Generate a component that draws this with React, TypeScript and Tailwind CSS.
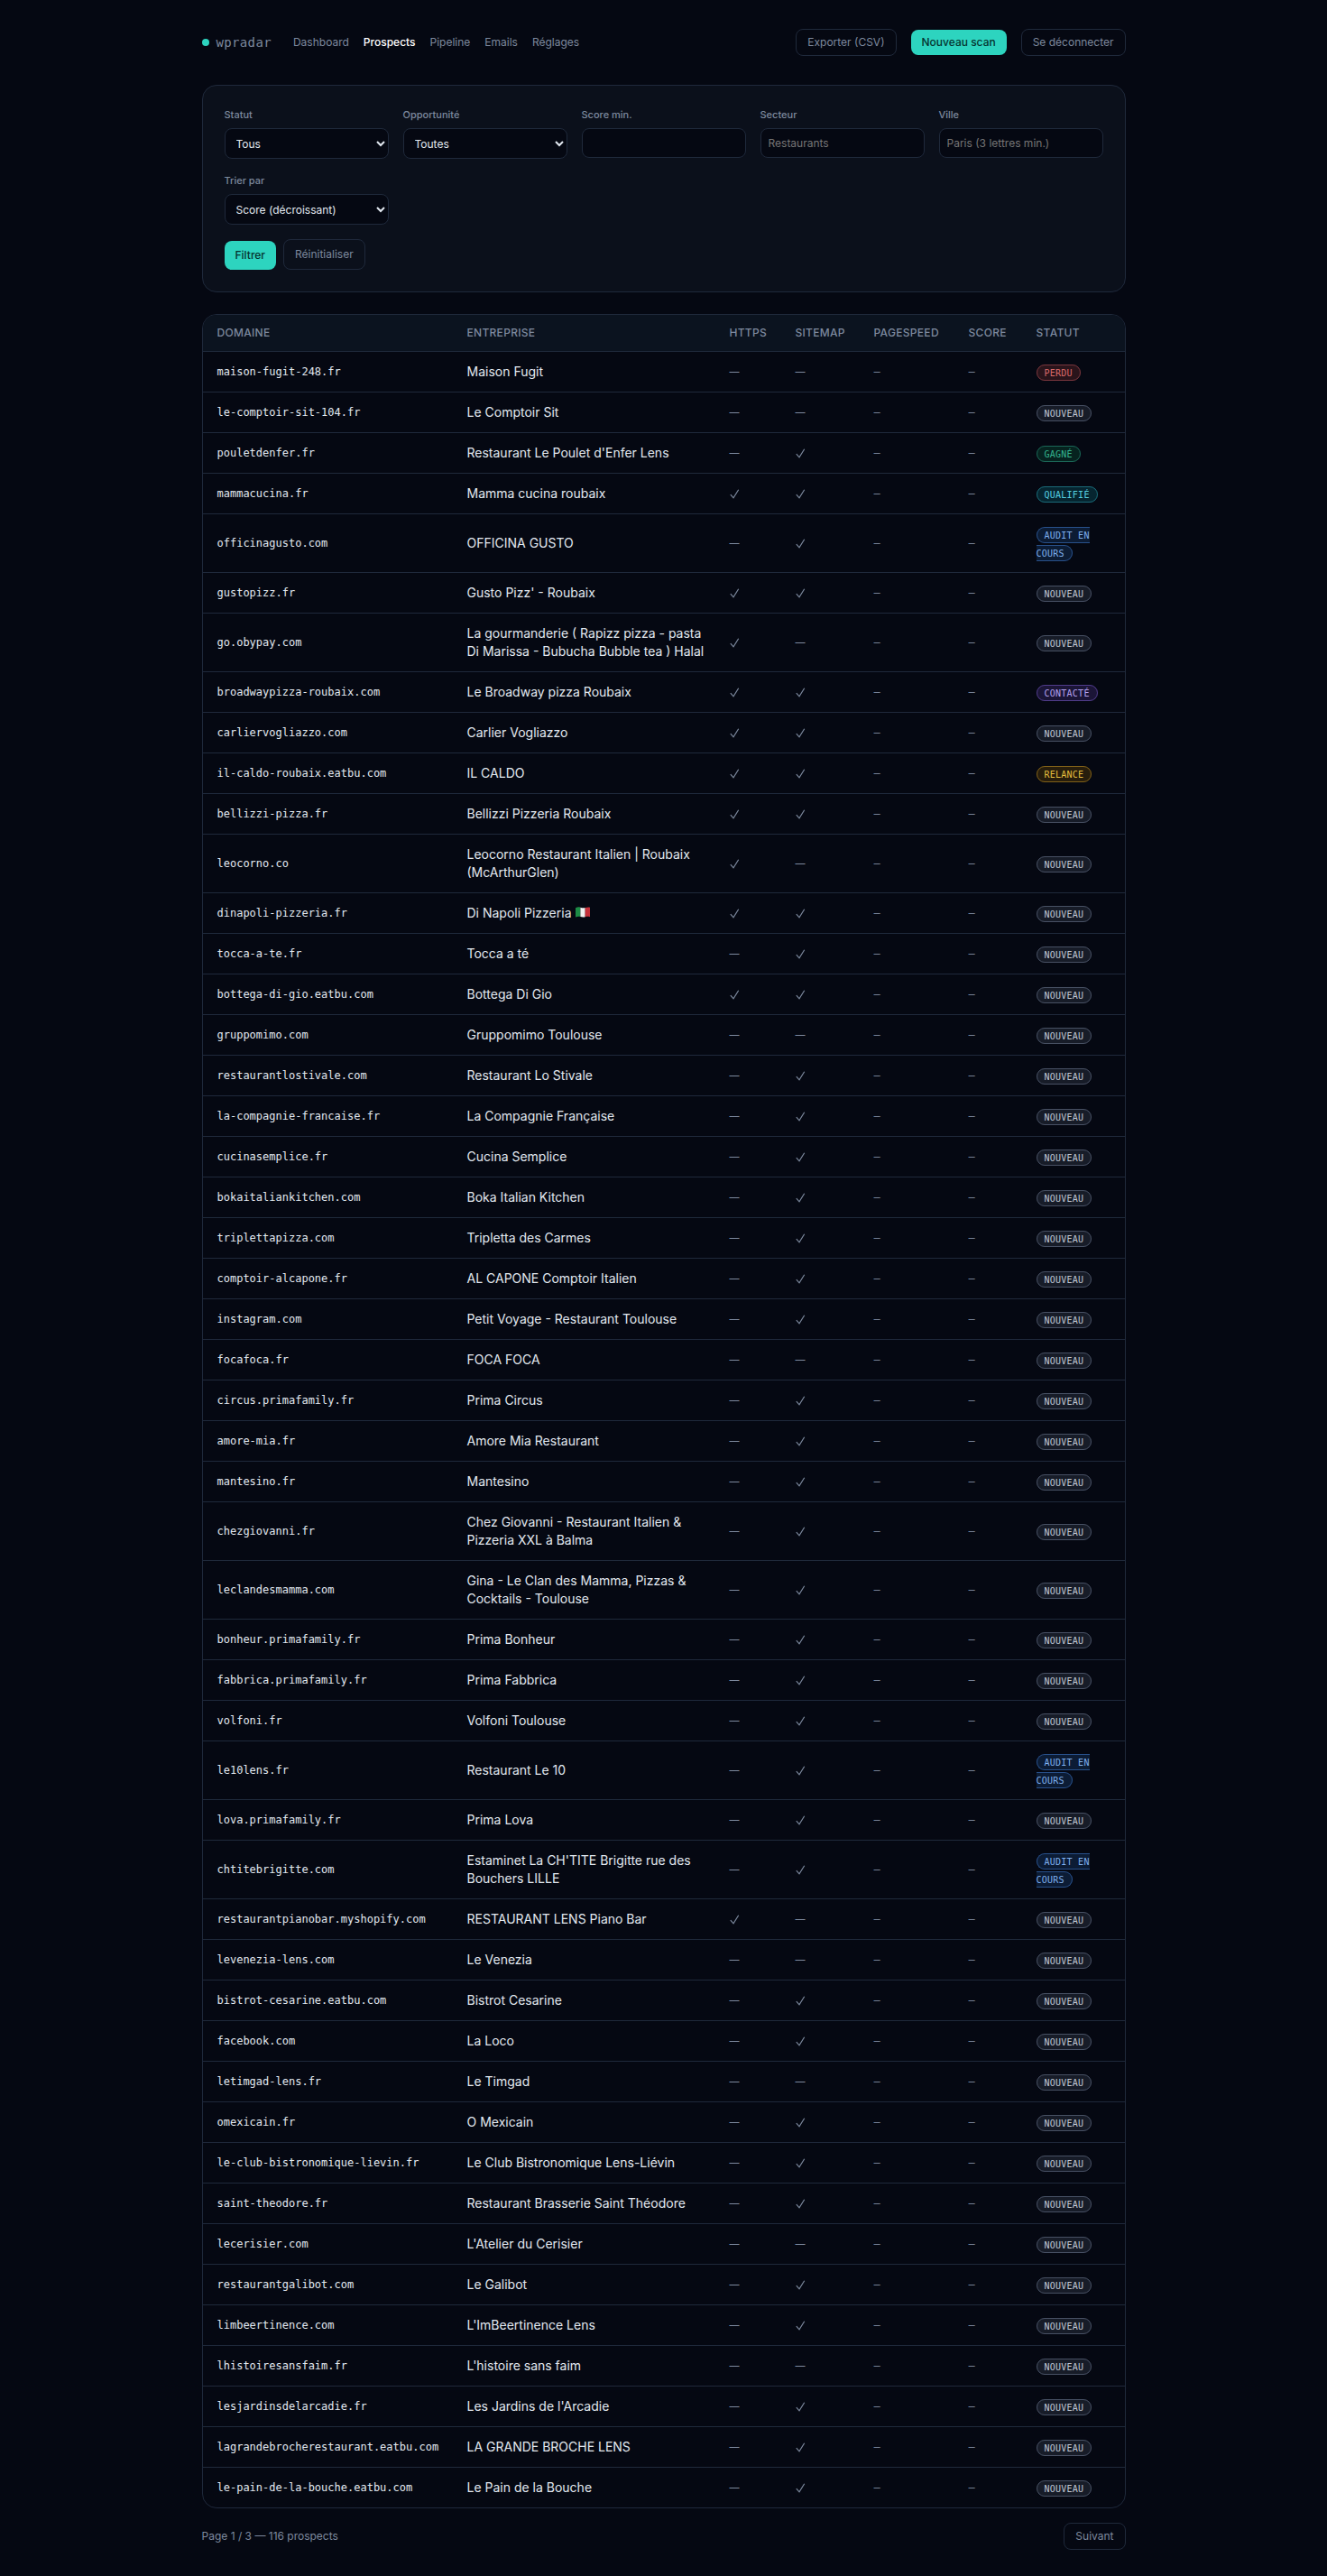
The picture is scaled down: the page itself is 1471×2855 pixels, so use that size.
import React from 'react';
import clsx from 'clsx';

type Status = 'NOUVEAU' | 'PERDU' | 'GAGNÉ' | 'QUALIFIÉ' | 'AUDIT EN COURS' | 'CONTACTÉ' | 'RELANCE';

interface Prospect {
  domain: string;
  company: string;
  https: boolean;
  sitemap: boolean;
  status: Status;
  flag?: boolean;
}

const MONO = "font-['DejaVu_Sans_Mono',monospace]";

const STATUS_STYLES: Record<Status, string> = {
  NOUVEAU: 'border-[#475063] bg-[#171c28] text-[#c0c8d4]',
  PERDU: 'border-[#78363d] bg-[#2a141b] text-[#dc6b6b]',
  GAGNÉ: 'border-[#1b6657] bg-[#06231f] text-[#34b58f]',
  QUALIFIÉ: 'border-[#1a6a78] bg-[#062530] text-[#56cfe1]',
  'AUDIT EN COURS': 'border-[#28508a] bg-[#0c1c35] text-[#7fb0ee]',
  CONTACTÉ: 'border-[#503c8a] bg-[#1b1537] text-[#b3a0ee]',
  RELANCE: 'border-[#806018] bg-[#271d0c] text-[#e5bf3e]',
};

const p = (
  domain: string,
  company: string,
  https: 0 | 1,
  sitemap: 0 | 1,
  status: Status = 'NOUVEAU',
  flag = false
): Prospect => ({ domain, company, https: !!https, sitemap: !!sitemap, status, flag });

const PROSPECTS: Prospect[] = [
  p('maison-fugit-248.fr', 'Maison Fugit', 0, 0, 'PERDU'),
  p('le-comptoir-sit-104.fr', 'Le Comptoir Sit', 0, 0),
  p('pouletdenfer.fr', "Restaurant Le Poulet d'Enfer Lens", 0, 1, 'GAGNÉ'),
  p('mammacucina.fr', 'Mamma cucina roubaix', 1, 1, 'QUALIFIÉ'),
  p('officinagusto.com', 'OFFICINA GUSTO', 0, 1, 'AUDIT EN COURS'),
  p('gustopizz.fr', "Gusto Pizz' - Roubaix", 1, 1),
  p('go.obypay.com', 'La gourmanderie ( Rapizz pizza - pasta Di Marissa - Bubucha Bubble tea ) Halal', 1, 0),
  p('broadwaypizza-roubaix.com', 'Le Broadway pizza Roubaix', 1, 1, 'CONTACTÉ'),
  p('carliervogliazzo.com', 'Carlier Vogliazzo', 1, 1),
  p('il-caldo-roubaix.eatbu.com', 'IL CALDO', 1, 1, 'RELANCE'),
  p('bellizzi-pizza.fr', 'Bellizzi Pizzeria Roubaix', 1, 1),
  p('leocorno.co', 'Leocorno Restaurant Italien | Roubaix (McArthurGlen)', 1, 0),
  p('dinapoli-pizzeria.fr', 'Di Napoli Pizzeria', 1, 1, 'NOUVEAU', true),
  p('tocca-a-te.fr', 'Tocca a té', 0, 1),
  p('bottega-di-gio.eatbu.com', 'Bottega Di Gio', 1, 1),
  p('gruppomimo.com', 'Gruppomimo Toulouse', 0, 0),
  p('restaurantlostivale.com', 'Restaurant Lo Stivale', 0, 1),
  p('la-compagnie-francaise.fr', 'La Compagnie Française', 0, 1),
  p('cucinasemplice.fr', 'Cucina Semplice', 0, 1),
  p('bokaitaliankitchen.com', 'Boka Italian Kitchen', 0, 1),
  p('triplettapizza.com', 'Tripletta des Carmes', 0, 1),
  p('comptoir-alcapone.fr', 'AL CAPONE Comptoir Italien', 0, 1),
  p('instagram.com', 'Petit Voyage - Restaurant Toulouse', 0, 1),
  p('focafoca.fr', 'FOCA FOCA', 0, 0),
  p('circus.primafamily.fr', 'Prima Circus', 0, 1),
  p('amore-mia.fr', 'Amore Mia Restaurant', 0, 1),
  p('mantesino.fr', 'Mantesino', 0, 1),
  p('chezgiovanni.fr', 'Chez Giovanni - Restaurant Italien & Pizzeria XXL à Balma', 0, 1),
  p('leclandesmamma.com', 'Gina - Le Clan des Mamma, Pizzas & Cocktails - Toulouse', 0, 1),
  p('bonheur.primafamily.fr', 'Prima Bonheur', 0, 1),
  p('fabbrica.primafamily.fr', 'Prima Fabbrica', 0, 1),
  p('volfoni.fr', 'Volfoni Toulouse', 0, 1),
  p('le10lens.fr', 'Restaurant Le 10', 0, 1, 'AUDIT EN COURS'),
  p('lova.primafamily.fr', 'Prima Lova', 0, 1),
  p('chtitebrigitte.com', "Estaminet La CH'TITE Brigitte rue des Bouchers LILLE", 0, 1, 'AUDIT EN COURS'),
  p('restaurantpianobar.myshopify.com', 'RESTAURANT LENS Piano Bar', 1, 0),
  p('levenezia-lens.com', 'Le Venezia', 0, 0),
  p('bistrot-cesarine.eatbu.com', 'Bistrot Cesarine', 0, 1),
  p('facebook.com', 'La Loco', 0, 1),
  p('letimgad-lens.fr', 'Le Timgad', 0, 0),
  p('omexicain.fr', 'O Mexicain', 0, 1),
  p('le-club-bistronomique-lievin.fr', 'Le Club Bistronomique Lens-Liévin', 0, 1),
  p('saint-theodore.fr', 'Restaurant Brasserie Saint Théodore', 0, 1),
  p('lecerisier.com', "L'Atelier du Cerisier", 0, 0),
  p('restaurantgalibot.com', 'Le Galibot', 0, 1),
  p('limbeertinence.com', "L'ImBeertinence Lens", 0, 1),
  p('lhistoiresansfaim.fr', "L'histoire sans faim", 0, 0),
  p('lesjardinsdelarcadie.fr', "Les Jardins de l'Arcadie", 0, 1),
  p('lagrandebrocherestaurant.eatbu.com', 'LA GRANDE BROCHE LENS', 0, 1),
  p('le-pain-de-la-bouche.eatbu.com', 'Le Pain de la Bouche', 0, 1),
];

const NAV = ['Dashboard', 'Prospects', 'Pipeline', 'Emails', 'Réglages'];

const COLUMNS = [
  { label: 'Domaine', width: 'w-[277px]' },
  { label: 'Entreprise', width: 'w-[291px]' },
  { label: 'HTTPS', width: 'w-[73px]' },
  { label: 'Sitemap', width: 'w-[87px]' },
  { label: 'PageSpeed', width: 'w-[105px]' },
  { label: 'Score', width: 'w-[75px]' },
  { label: 'Statut', width: '' },
];

const outlineButton = 'rounded-lg border border-[#1f293b] px-3 text-xs text-[#7d899e]';
const primaryButton = 'rounded-lg bg-[#2dd4bf] px-3 text-xs font-medium text-[#05332f]';
const field = 'w-full rounded-lg border border-[#1f293b] bg-[#050812] px-2 text-xs text-[#e2e8f0]';
const selectField = clsx(field, 'h-[34px]');
const inputField = clsx(field, 'h-[33px] placeholder:text-[#757575]');

const Field: React.FC<{ id: string; label: string; children: React.ReactNode }> = ({ id, label, children }) => (
  <div className="flex min-w-0 flex-col gap-1.5">
    <label htmlFor={id} className="text-[11px] leading-[17px] font-medium text-[#7d899e]">
      {label}
    </label>
    {children}
  </div>
);

const ItalianFlag = () => (
  <svg role="img" aria-label="Italie" viewBox="0 0 16 12" className="mb-1 ml-1 inline-block h-3 w-4 align-middle">
    <path d="M0 1.2C2 .2 3.800.2 5.400.7V11.100C3.800 10.600 2 10.700 0 11.500Z" fill="#1d8a45" />
    <path d="M5.400.7C7.200 1.200 9 1.500 10.700 1V11.200C9 11.700 7.200 11.600 5.400 11.100Z" fill="#f1f1f1" />
    <path d="M10.700 1C12.500.6 14.200.2 16 .8V11.200C14.200 10.600 12.500 10.800 10.700 11.200Z" fill="#c5303a" />
  </svg>
);

const Filters = () => (
  <form className="mb-6 rounded-2xl border border-[#1f293b] bg-[#0b101b] p-6" onSubmit={e => e.preventDefault()}>
    <div className="grid grid-cols-2 gap-4 lg:grid-cols-5">
      <Field id="status" label="Statut">
        <select id="status" className={selectField}>
          <option>Tous</option>
        </select>
      </Field>
      <Field id="opportunity" label="Opportunité">
        <select id="opportunity" className={selectField}>
          <option>Toutes</option>
        </select>
      </Field>
      <Field id="score" label="Score min.">
        <input id="score" type="number" className={inputField} />
      </Field>
      <Field id="sector" label="Secteur">
        <input id="sector" type="text" placeholder="Restaurants" className={inputField} />
      </Field>
      <Field id="city" label="Ville">
        <input id="city" type="text" placeholder="Paris (3 lettres min.)" className={inputField} />
      </Field>
      <Field id="sort" label="Trier par">
        <select id="sort" className={selectField}>
          <option>Score (décroissant)</option>
        </select>
      </Field>
    </div>
    <div className="mt-4 flex items-end gap-2">
      <button type="submit" className={clsx(primaryButton, 'py-2')}>Filtrer</button>
      <button type="reset" className={clsx(outlineButton, 'py-2')}>Réinitialiser</button>
    </div>
  </form>
);

const Flagged: React.FC<{ ok: boolean }> = ({ ok }) => (
  <td className="px-4 py-3 text-[11px] leading-5 text-[#7d899e]">
    {ok ? (
      <svg role="img" aria-label="Oui" viewBox="0 0 11 11" className="h-[11px] w-[11px]" fill="none">
        <path d="M.8 6.200L4 9.800L9.700.8" stroke="currentColor" strokeWidth="1.200" />
      </svg>
    ) : (
      '—'
    )}
  </td>
);

const ProspectRow: React.FC<{ row: Prospect }> = ({ row }) => (
  <tr className="border-b border-[#1f293b] last:border-b-0">
    <td className={clsx(MONO, 'px-4 py-3 text-xs leading-5')}>
      <a href="#">{row.domain}</a>
    </td>
    <td className="py-3 pr-2 pl-4">
      {row.company}
      {row.flag && <ItalianFlag />}
    </td>
    <Flagged ok={row.https} />
    <Flagged ok={row.sitemap} />
    <td className={clsx(MONO, 'px-4 py-3 text-xs leading-5 text-[#7d899e]')}>—</td>
    <td className={clsx(MONO, 'px-4 py-3 text-xs leading-5 text-[#7d899e]')}>—</td>
    <td className="px-4 py-3">
      <span className={clsx(MONO, 'rounded-full border px-2 pt-[3px] pb-0.5 text-[10px] tracking-wide', STATUS_STYLES[row.status])}>
        {row.status}
      </span>
    </td>
  </tr>
);

const App: React.FC = () => (
  <div className="min-h-screen bg-[#050812] px-6 py-8 font-['Inter',sans-serif] text-[#e2e8f0]">
    <div className="mx-auto max-w-5xl">
      <header className="mb-8 flex flex-wrap items-center justify-between gap-4">
        <div className="flex items-center gap-6">
          <div className="flex items-center gap-2">
            <span className="size-2 rounded-full bg-[#2dd4bf]" />
            <span className={clsx(MONO, 'text-sm tracking-wide text-[#7d899e]')}>wpradar</span>
          </div>
          <nav className="flex gap-4 text-xs text-[#7d899e]">
            {NAV.map(item => (
              <a key={item} href="#" className={item === 'Prospects' ? 'font-medium text-white' : ''}>
                {item}
              </a>
            ))}
          </nav>
        </div>
        <div className="flex items-center gap-4">
          <a href="#" className={clsx(outlineButton, 'py-1.5')}>Exporter (CSV)</a>
          <a href="#" className={clsx(primaryButton, 'py-1.5')}>Nouveau scan</a>
          <button type="button" className={clsx(outlineButton, 'py-1.5')}>Se déconnecter</button>
        </div>
      </header>

      <Filters />

      <div className="overflow-hidden rounded-2xl border border-[#1f293b]">
        <table className="w-full table-fixed text-left text-sm">
          <thead className="bg-[#0b131f] text-xs text-[#7d899e] uppercase">
            <tr className="border-b border-[#1f293b]">
              {COLUMNS.map(col => (
                <th key={col.label} className={clsx('px-4 py-3 font-medium tracking-wide', col.width)}>
                  {col.label}
                </th>
              ))}
            </tr>
          </thead>
          <tbody>
            {PROSPECTS.map(row => (
              <ProspectRow key={row.domain} row={row} />
            ))}
          </tbody>
        </table>
      </div>

      <div className="mt-4 flex items-center justify-between text-xs text-[#7d899e]">
        <p>Page 1 / 3 — 116 prospects</p>
        <a href="#" className={clsx(outlineButton, 'py-1.5')}>Suivant</a>
      </div>
    </div>
  </div>
);

export default App;
